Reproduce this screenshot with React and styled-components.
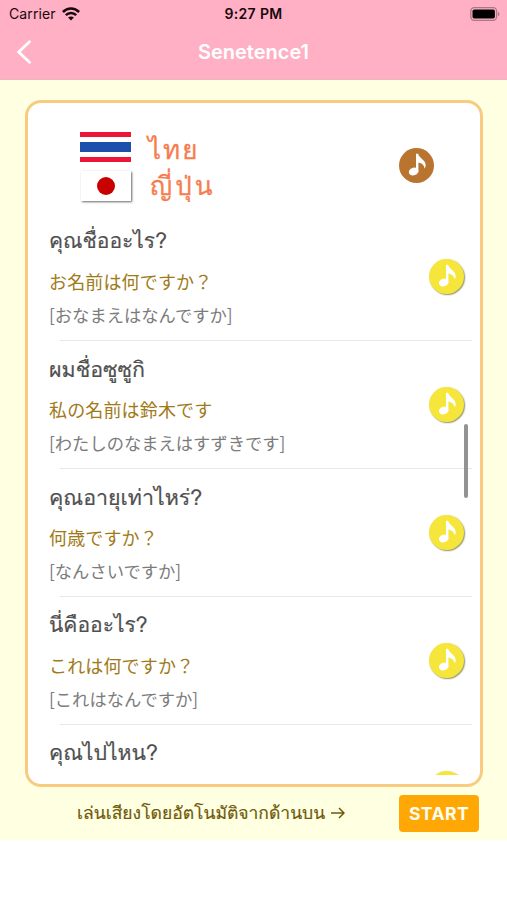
import React from "react";
import styled, { createGlobalStyle } from "styled-components";

const GlobalStyle = createGlobalStyle`
  * { box-sizing: border-box; }
  body { margin: 0; background: #fff; font-family: Inter, Loma, "Noto Sans CJK JP", sans-serif; }
`;

const Screen = styled.div`
  width: 507px;
  height: 900px;
  overflow: hidden;
  background: #fff;
`;

const Header = styled.header`
  height: 80px;
  background: #ffb0c5;
  border-bottom: 1px solid #e9b9b9;
`;

const StatusBar = styled.div`
  display: grid;
  grid-template-columns: 1fr auto 1fr;
  align-items: center;
  height: 27px;
  padding: 0 7px 0 9px;
  color: #17090d;
`;

const Carrier = styled.div`
  display: flex;
  align-items: center;
  gap: 6px;
  font-size: 14px;
  letter-spacing: 0.1px;
`;

const Clock = styled.div`
  margin-left: -2px;
  font-size: 14px;
  font-weight: 600;
  letter-spacing: 0.35px;
`;

const BatterySlot = styled.div`
  display: flex;
  justify-content: flex-end;
`;

const NavBar = styled.nav`
  display: grid;
  grid-template-columns: 40px 1fr 40px;
  align-items: center;
  height: 50px;
  color: #fff;
`;

const BackButton = styled.button`
  display: flex;
  padding: 0 0 0 16px;
  border: 0;
  background: none;
  color: inherit;
`;

const Title = styled.h1`
  margin: 0;
  font-size: 20px;
  font-weight: 600;
  text-align: center;
  line-height: 24px;
`;

const Body = styled.main`
  display: flex;
  flex-direction: column;
  height: 760px;
  padding: 20px 24px 0 25px;
  background: #ffffe1;
`;

const Card = styled.section`
  display: flex;
  flex-direction: column;
  position: relative;
  height: 687px;
  flex: none;
  padding-bottom: 9px;
  border: 3px solid #f9cb80;
  border-radius: 16px;
  background: #fff;
`;

const CardHead = styled.div`
  display: flex;
  flex: none;
  height: 110px;
  padding: 29px 46px 0 52px;
`;

const Flags = styled.div`
  display: flex;
  flex-direction: column;
  gap: 9px;
  width: 52px;
`;

const ThaiFlag = styled.div`
  height: 30px;
  width: 51px;
  background: linear-gradient(#ed1538 0 5px, #fff 5px 10px, #1b50ad 10px 20px, #fff 20px 25px, #ed1538 25px);
`;

const JapanFlag = styled.div`
  display: flex;
  align-items: center;
  justify-content: center;
  width: 50px;
  height: 30px;
  margin-left: 1px;
  background: #fff;
  box-shadow: 1px 1px 2px rgba(0, 0, 0, 0.6);

  &::after {
    content: "";
    width: 18px;
    height: 18px;
    border-radius: 50%;
    background: #c90000;
  }
`;

const Languages = styled.div`
  flex: 1;
  padding-left: 16px;
  color: #f67d50;
  font-family: Loma, sans-serif;
  font-size: 26px;
  -webkit-text-stroke: 0.3px #f67d50;
`;

const Language = styled.div`
  height: 36px;
  line-height: 36px;
  padding-left: ${(p) => p.$indent}px;
  letter-spacing: ${(p) => p.$spacing}px;
  white-space: nowrap;
`;

const HeadSound = styled.div`
  padding-top: 16px;
`;

const SoundButton = styled.button`
  display: flex;
  flex: none;
  width: 35px;
  height: 35px;
  padding: 0;
  border: 0;
  border-radius: 50%;
  background: ${(p) => (p.$brown ? "#b97530" : "#f6e63b")};
  box-shadow: ${(p) => (p.$brown ? "none" : "1px 1px 1.5px rgba(90, 90, 30, 0.65)")};
`;

const List = styled.ul`
  flex: 1;
  min-height: 0;
  margin: 0;
  padding: 0;
  overflow: hidden;
  list-style: none;
`;

const Row = styled.li`
  display: flex;
  position: relative;
  justify-content: space-between;
  height: 128px;
  padding: 0 16px 0 21px;

  &::after {
    content: "";
    position: absolute;
    left: 32px;
    right: 8px;
    bottom: 0;
    height: 1px;
    background: #e8e8e9;
  }
`;

const Phrases = styled.div`
  display: flex;
  flex-direction: column;
  padding-top: 9px;
  white-space: nowrap;
`;

const Thai = styled.div`
  height: 38px;
  line-height: 38px;
  color: #505050;
  font-family: Loma, sans-serif;
  font-size: ${(p) => p.$size}px;
  -webkit-text-stroke: 0.2px #505050;
`;

const Japanese = styled.div`
  height: 42px;
  line-height: 42px;
  color: #a07a18;
  font-family: "Noto Sans CJK JP", sans-serif;
  font-size: 18px;
  letter-spacing: 0.15px;
`;

const Reading = styled.div`
  height: 26px;
  line-height: 25px;
  color: #7c7c7c;
  font-family: "Noto Sans CJK JP", sans-serif;
  font-size: 17.3px;
`;

const RowSound = styled.div`
  padding-top: 46px;
`;

const ScrollThumb = styled.div`
  position: absolute;
  right: 12px;
  top: 321px;
  width: 4px;
  height: 74px;
  border-radius: 2px;
  background: #939394;
`;

const Footer = styled.footer`
  display: flex;
  align-items: center;
  justify-content: space-between;
  height: 53px;
  padding: 0 4px 1px 52px;
`;

const Hint = styled.div`
  display: flex;
  align-items: center;
  gap: 6px;
  color: #6f5a0c;
  font-family: Loma, sans-serif;
  font-size: 17.5px;
  white-space: nowrap;
  -webkit-text-stroke: 0.2px #6f5a0c;
`;

const StartButton = styled.button`
  width: 80px;
  height: 37px;
  padding: 0;
  border: 0;
  border-radius: 4px;
  background: #ffa704;
  color: #fffdf0;
  font: 700 17.6px Inter, sans-serif;
  letter-spacing: 0.4px;
`;

function Note() {
  return (
    <svg width="35" height="35" viewBox="0 0 35 35" fill="#fff">
      <ellipse cx="14.6" cy="23.5" rx="4.9" ry="3.9" transform="rotate(-22 14.6 23.5)" />
      <path d="M17 5.8h2.2c.5 4.200 7.300 6 7.500 11.200 0 1.400-.4 2.500-1.200 3.400-.2-3.200-2.400-5.200-6.100-6v9.900H17z" />
    </svg>
  );
}

function Wifi() {
  return (
    <svg width="18" height="14" viewBox="0 0 18 14" fill="none" stroke="currentColor" strokeWidth="2.5">
      <path d="M.9 5c4.600-4.600 11.600-4.600 16.200 0M3.800 8.200c3-2.900 7.400-2.900 10.400 0" />
      <path d="M6.100 10.500c1.700-1.500 4.100-1.500 5.800 0L9 13.500z" fill="currentColor" stroke="none" />
    </svg>
  );
}

function Battery() {
  return (
    <svg width="30" height="14" viewBox="0 0 30 14">
      <rect x=".8" y=".7" width="25.8" height="12.6" rx="3.5" fill="none" stroke="#a87885" strokeWidth="1.3" />
      <rect x="2.5" y="2.4" width="22.4" height="9.2" rx="1.8" fill="#000" />
      <path d="M28 4.700q3 2.300 0 4.600z" fill="#a87885" />
    </svg>
  );
}

const phrases = [
  { thai: "คุณชื่ออะไร?", japanese: "お名前は何ですか？", reading: "[おなまえはなんですか]", size: 21 },
  { thai: "ผมชื่อซูซูกิ", japanese: "私の名前は鈴木です", reading: "[わたしのなまえはすずきです]", size: 21.4 },
  { thai: "คุณอายุเท่าไหร่?", japanese: "何歳ですか？", reading: "[なんさいですか]", size: 21.4 },
  { thai: "นี่คืออะไร?", japanese: "これは何ですか？", reading: "[これはなんですか]", size: 21 },
  { thai: "คุณไปไหน?", japanese: "", reading: "", size: 21.2 },
];

export default function App() {
  return (
    <Screen>
      <GlobalStyle />
      <Header>
        <StatusBar>
          <Carrier>Carrier <Wifi /></Carrier>
          <Clock>9:27 PM</Clock>
          <BatterySlot><Battery /></BatterySlot>
        </StatusBar>
        <NavBar>
          <BackButton aria-label="Back">
            <svg width="16" height="24" viewBox="0 0 16 24" fill="none" stroke="currentColor" strokeWidth="2.8" strokeLinecap="round">
              <path d="M13.500 1.700 2.700 12l10.800 10.300" />
            </svg>
          </BackButton>
          <Title>Senetence1</Title>
        </NavBar>
      </Header>
      <Body>
        <Card>
          <CardHead>
            <Flags><ThaiFlag /><JapanFlag /></Flags>
            <Languages>
              <Language $indent={0} $spacing={2}>ไทย</Language>
              <Language $indent={2} $spacing={3}>ญี่ปุ่น</Language>
            </Languages>
            <HeadSound><SoundButton $brown aria-label="Play all"><Note /></SoundButton></HeadSound>
          </CardHead>
          <List>
            {phrases.map((p) => (
              <Row key={p.thai}>
                <Phrases>
                  <Thai $size={p.size}>{p.thai}</Thai>
                  <Japanese>{p.japanese}</Japanese>
                  <Reading>{p.reading}</Reading>
                </Phrases>
                <RowSound><SoundButton aria-label="Play"><Note /></SoundButton></RowSound>
              </Row>
            ))}
          </List>
          <ScrollThumb />
        </Card>
        <Footer>
          <Hint>
            <span>เล่นเสียงโดยอัตโนมัติจากด้านบน</span>
            <svg width="14" height="12" viewBox="0 0 14 12" fill="none" stroke="currentColor" strokeWidth="1.5">
              <path d="M0 6h13M8 1l5 5-5 5" />
            </svg>
          </Hint>
          <StartButton>START</StartButton>
        </Footer>
      </Body>
    </Screen>
  );
}
